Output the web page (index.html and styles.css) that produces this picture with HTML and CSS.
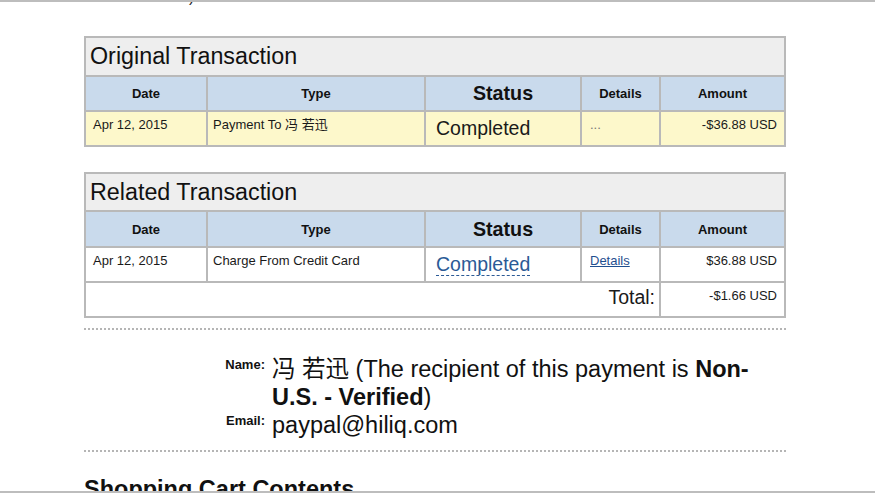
FILE: index.html
```html
<!DOCTYPE html>
<html lang="en">
<head>
<meta charset="utf-8">
<title>Transaction Details</title>
<link rel="stylesheet" href="styles.css">
</head>
<body>
<div class="frame-top"></div>
<div class="topnote"><span>)</span></div>
<main class="page">
  <section class="txn txn-original">
    <div class="txn-title">Original Transaction</div>
    <div class="th">Date</div>
    <div class="th">Type</div>
    <div class="th th-big">Status</div>
    <div class="th">Details</div>
    <div class="th">Amount</div>
    <div class="td td-date">Apr 12, 2015</div>
    <div class="td td-type">Payment To 冯 若迅</div>
    <div class="td td-status">Completed</div>
    <div class="td td-details muted">...</div>
    <div class="td td-amount">-$36.88 USD</div>
  </section>

  <section class="txn txn-related">
    <div class="txn-title">Related Transaction</div>
    <div class="th">Date</div>
    <div class="th">Type</div>
    <div class="th th-big">Status</div>
    <div class="th">Details</div>
    <div class="th">Amount</div>
    <div class="td td-date">Apr 12, 2015</div>
    <div class="td td-type">Charge From Credit Card</div>
    <div class="td td-status"><a class="status-link" href="#">Completed</a></div>
    <div class="td td-details"><a class="details-link" href="#">Details</a></div>
    <div class="td td-amount">$36.88 USD</div>
    <div class="td td-total-label">Total:</div>
    <div class="td td-amount">-$1.66 USD</div>
  </section>

  <hr class="dotted dotted-first">

  <section class="recipient">
    <div class="label">Name:</div>
    <div class="value">冯 若迅 (The recipient of this payment is <b>Non-U.S. - Verified</b>)</div>
    <div class="label">Email:</div>
    <div class="value">paypal@hiliq.com</div>
  </section>

  <hr class="dotted dotted-second">

  <h2 class="cart-heading">Shopping Cart Contents</h2>
</main>
<div class="frame-bottom"></div>
</body>
</html>
```

FILE: styles.css
```css
html, body {
  margin: 0;
  padding: 0;
  background: #ffffff;
}

body {
  font-family: "Liberation Sans", Arial, "Noto Sans CJK SC", sans-serif;
  color: #111111;
  overflow: hidden;
}

.frame-top {
  position: fixed;
  top: 0;
  left: 0;
  right: 0;
  height: 2px;
  background: #bdbdbd;
}

.frame-bottom {
  position: fixed;
  bottom: 0;
  left: 0;
  right: 0;
  height: 2px;
  background: #bdbdbd;
}

.topnote {
  height: 6px;
  overflow: hidden;
  padding-left: 189px;
}

.topnote span {
  display: block;
  font-size: 16px;
  line-height: 16px;
  margin-top: -11px;
  color: #222;
}

.page {
  margin: 30px 0 0 84px;
  width: 702px;
}

.txn {
  display: grid;
  grid-template-columns: 120px 216px 154px 77px 123px;
  gap: 2px;
  padding: 2px;
  background: #b9b9b9;
}

.txn-original {
  grid-template-rows: 37px 33px 33px;
}

.txn-related {
  margin-top: 25px;
  grid-template-rows: 36px 34px 33px 33px;
}

.txn-title {
  grid-column: 1 / -1;
  background: #eeeeee;
  font-size: 23.3px;
  padding-left: 4px;
  display: flex;
  align-items: center;
  color: #111;
}

.th {
  background: #c9daec;
  font-size: 13px;
  font-weight: bold;
  display: flex;
  align-items: center;
  justify-content: center;
  color: #111;
}

.th-big {
  font-size: 19.7px;
}

.td {
  background: #ffffff;
  font-size: 13px;
  line-height: 15px;
  padding: 5px 6px 0;
  color: #1a1a1a;
}

.txn-original .td {
  background: #fdf8cb;
}

.td-date {
  padding-left: 7px;
}

.td-type {
  padding-left: 5px;
}

.td-status {
  font-size: 19.5px;
  line-height: 22px;
  padding-top: 5px;
  padding-left: 10px;
}

.td-details {
  padding-left: 8px;
}

.muted {
  color: #777777;
}

.td-amount {
  text-align: right;
  padding-right: 7px;
}

.td-total-label {
  grid-column: 1 / 5;
  text-align: right;
  font-size: 19.5px;
  line-height: 22px;
  padding-top: 3px;
  padding-right: 4px;
}

.status-link {
  color: #2b5a96;
  text-decoration: none;
  border-bottom: 1px dashed #2b5a96;
}

.details-link {
  color: #1f4f8f;
  text-decoration: underline;
}

.dotted {
  border: 0;
  border-top: 2px dotted #b5b5b5;
  margin: 0;
  height: 0;
}

.dotted-first {
  margin-top: 10px;
}

.recipient {
  display: grid;
  grid-template-columns: 181px 492px;
  column-gap: 7px;
  margin-top: 25px;
}

.label {
  font-size: 13px;
  line-height: 15px;
  font-weight: bold;
  text-align: right;
  padding-top: 2px;
  color: #111;
}

.value {
  font-size: 23.5px;
  line-height: 28px;
  color: #111;
}

.dotted-second {
  margin-top: 11px;
}

.cart-heading {
  margin: 24px 0 0;
  font-size: 23.5px;
  font-weight: bold;
  color: #111;
}
```
